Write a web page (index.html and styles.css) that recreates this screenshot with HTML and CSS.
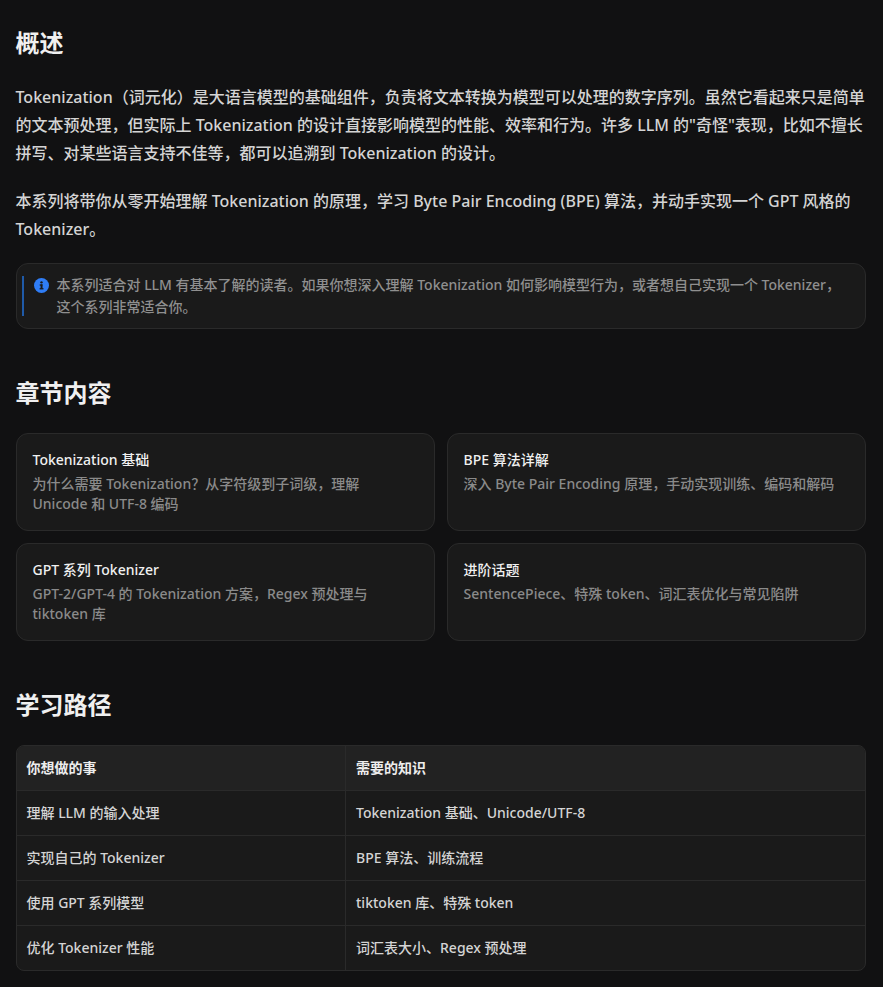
FILE: index.html
```html
<!DOCTYPE html>
<html lang="zh-CN">
<head>
<meta charset="utf-8">
<title>Tokenization</title>
<link rel="stylesheet" href="styles.css">
</head>
<body>
<main class="content">
  <h2 class="heading heading-first">概述</h2>
  <p class="para">Tokenization（词元化）是大语言模型的基础组件，负责将文本转换为模型可以处理的数字序列。虽然它看起来只是简单的文本预处理，但实际上 Tokenization 的设计直接影响模型的性能、效率和行为。许多 LLM 的"奇怪"表现，比如不擅长拼写、对某些语言支持不佳等，都可以追溯到 Tokenization 的设计。</p>
  <p class="para">本系列将带你从零开始理解 Tokenization 的原理，学习 Byte Pair Encoding (BPE) 算法，并动手实现一个 GPT 风格的 Tokenizer。</p>
  <aside class="callout">
    <span class="callout-bar"></span>
    <svg class="callout-icon" viewBox="0 0 16 16" width="15" height="15" aria-hidden="true"><circle cx="8" cy="8" r="8" fill="#2f7df6"/><circle cx="8" cy="4.6" r="1.25" fill="#1a1a1a"/><rect x="6.1" y="6.8" width="2.9" height="1.4" fill="#1a1a1a"/><rect x="7" y="6.8" width="2.1" height="4.6" fill="#1a1a1a"/><rect x="6" y="10.8" width="4.1" height="1.4" fill="#1a1a1a"/></svg>
    <p class="callout-text">本系列适合对 LLM 有基本了解的读者。如果你想深入理解 Tokenization 如何影响模型行为，或者想自己实现一个 Tokenizer，这个系列非常适合你。</p>
  </aside>
  <h2 class="heading">章节内容</h2>
  <div class="cards">
    <div class="card"><div class="card-title">Tokenization 基础</div><div class="card-desc">为什么需要 Tokenization？从字符级到子词级，理解 Unicode 和 UTF-8 编码</div></div>
    <div class="card"><div class="card-title">BPE 算法详解</div><div class="card-desc">深入 Byte Pair Encoding 原理，手动实现训练、编码和解码</div></div>
    <div class="card"><div class="card-title">GPT 系列 Tokenizer</div><div class="card-desc">GPT-2/GPT-4 的 Tokenization 方案，Regex 预处理与 tiktoken 库</div></div>
    <div class="card"><div class="card-title">进阶话题</div><div class="card-desc">SentencePiece、特殊 token、词汇表优化与常见陷阱</div></div>
  </div>
  <h2 class="heading">学习路径</h2>
  <div class="table-wrap">
    <table class="table">
      <thead><tr><th>你想做的事</th><th>需要的知识</th></tr></thead>
      <tbody>
        <tr><td>理解 LLM 的输入处理</td><td>Tokenization 基础、Unicode/UTF-8</td></tr>
        <tr><td>实现自己的 Tokenizer</td><td>BPE 算法、训练流程</td></tr>
        <tr><td>使用 GPT 系列模型</td><td>tiktoken 库、特殊 token</td></tr>
        <tr><td>优化 Tokenizer 性能</td><td>词汇表大小、Regex 预处理</td></tr>
      </tbody>
    </table>
  </div>
</main>
</body>
</html>
```
FILE: styles.css
```css
* { box-sizing: border-box; }
html, body { margin: 0; padding: 0; background: #111112; }
body {
  font-family: "Noto Sans", "Noto Sans CJK SC", sans-serif;
  font-weight: 500;
  color: #d4d4d4;
  font-size: 16px;
  line-height: 28px;
  height: 987px;
  overflow: hidden;
}
.content { padding: 0 17.5px 0 15.5px; }
.heading {
  margin: 48px 0 24px;
  font-size: 24px;
  line-height: 32px;
  font-weight: 600;
  color: #f0f0f0;
}
.heading-first { margin-top: 27px; }
.para { margin: 0 0 20px; }
.callout {
  margin-top: 20px;
  display: flex;
  align-items: flex-start;
  border: 1px solid #2a2a2a;
  border-radius: 12px;
  background: #1a1a1a;
  padding: 10px 16px 10px 5px;
}
.callout-bar {
  flex: none;
  width: 2px;
  height: 40px;
  margin: 2px 10px 0 0;
  background: #1f5aa8;
}
.callout-icon { flex: none; margin: 4px 8px 0 0; }
.callout-text { margin: 0; font-size: 14px; line-height: 22px; color: #8f8f8f; }
.cards { display: grid; grid-template-columns: 1fr 1fr; gap: 12px; }
.card {
  height: 98px;
  border: 1px solid #2a2a2a;
  border-radius: 12px;
  background: #1a1a1a;
  padding: 15px 16px;
}
.card-title { font-size: 14px; line-height: 22px; font-weight: 500; color: #f0f0f0; }
.card-desc { margin-top: 3px; font-size: 14px; line-height: 20px; color: #8a8a8a; }
.table-wrap {
  border: 1px solid #2a2a2a;
  border-radius: 8px;
  overflow: hidden;
  background: #1a1a1a;
}
.table { width: 100%; border-collapse: separate; border-spacing: 0; table-layout: fixed; font-size: 14px; line-height: 22px; }
.table th, .table td {
  height: 45px;
  padding: 0 10px;
  text-align: left;
  border-bottom: 1px solid #2a2a2a;
  border-right: 1px solid #2a2a2a;
}
.table th:first-child, .table td:first-child { width: 329.5px; }
.table th:last-child, .table td:last-child { border-right: 0; }
.table tbody tr:last-child td { border-bottom: 0; height: 44px; }
.table th { background: #222222; font-weight: 600; color: #ededed; }
.table td { color: #d4d4d4; }
```
